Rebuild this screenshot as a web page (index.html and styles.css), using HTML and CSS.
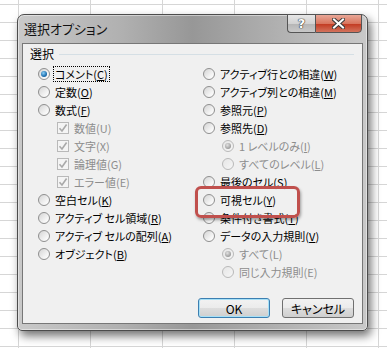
FILE: index.html
```html
<!DOCTYPE html>
<html>

<head>
  <title>選択オプション</title>
  <link rel="stylesheet" href="styles.css">
</head>

<body>
  <!-- Dialog window -->
  <div class="dialog">
    <!-- Title bar with caption buttons -->
    <div class="titlebar">
      <span class="title">選択オプション</span>
      <div class="caption">
        <span class="cap-help">?</span>
        <span class="cap-close">
          <svg width="13" height="11" viewBox="0 0 13 11">
            <path d="M2 1.5 L11 9.5 M11 1.5 L2 9.5" stroke="#3a3a3a" stroke-width="4" stroke-linecap="square" />
            <path d="M2 1.5 L11 9.5 M11 1.5 L2 9.5" stroke="#ffffff" stroke-width="2" stroke-linecap="square" />
          </svg>
        </span>
      </div>
    </div>

    <!-- Client area -->
    <div class="client">
      <div class="group-head">
        <span>選択</span>
        <i class="rule"></i>
      </div>

      <div class="columns">
        <!-- Left column -->
        <div class="col">
          <div class="row"><span class="radio on"></span><span class="focus">コメント(<u>C</u>)</span></div>
          <div class="row"><span class="radio"></span>定数(<u>O</u>)</div>
          <div class="row"><span class="radio"></span>数式(<u>F</u>)</div>
          <div class="row sub off"><span class="check"><svg width="10" height="10" viewBox="0 0 10 10"><path d="M1.5 5.2 L4 8 L8.6 1.5" fill="none" stroke="#a9a9a9" stroke-width="1.6" /></svg></span>数値(U)</div>
          <div class="row sub off"><span class="check"><svg width="10" height="10" viewBox="0 0 10 10"><path d="M1.5 5.2 L4 8 L8.6 1.5" fill="none" stroke="#a9a9a9" stroke-width="1.6" /></svg></span>文字(X)</div>
          <div class="row sub off"><span class="check"><svg width="10" height="10" viewBox="0 0 10 10"><path d="M1.5 5.2 L4 8 L8.6 1.5" fill="none" stroke="#a9a9a9" stroke-width="1.6" /></svg></span>論理値(G)</div>
          <div class="row sub off"><span class="check"><svg width="10" height="10" viewBox="0 0 10 10"><path d="M1.5 5.2 L4 8 L8.6 1.5" fill="none" stroke="#a9a9a9" stroke-width="1.6" /></svg></span>エラー値(E)</div>
          <div class="row"><span class="radio"></span>空白セル(<u>K</u>)</div>
          <div class="row"><span class="radio"></span>アクティブ セル領域(<u>R</u>)</div>
          <div class="row"><span class="radio"></span>アクティブ セルの配列(<u>A</u>)</div>
          <div class="row"><span class="radio"></span>オブジェクト(<u>B</u>)</div>
        </div>

        <!-- Right column -->
        <div class="col">
          <div class="row"><span class="radio"></span>アクティブ行との相違(<u>W</u>)</div>
          <div class="row"><span class="radio"></span>アクティブ列との相違(<u>M</u>)</div>
          <div class="row"><span class="radio"></span>参照元(<u>P</u>)</div>
          <div class="row"><span class="radio"></span>参照先(<u>D</u>)</div>
          <div class="row sub off"><span class="radio on"></span>1 レベルのみ(<u>I</u>)</div>
          <div class="row sub off"><span class="radio"></span>すべてのレベル(<u>L</u>)</div>
          <div class="row"><span class="radio"></span>最後のセル(<u>S</u>)</div>
          <div class="row"><span class="radio"></span>可視セル(<u>Y</u>)</div>
          <div class="row"><span class="radio"></span>条件付き書式(<u>T</u>)</div>
          <div class="row"><span class="radio"></span>データの入力規則(<u>V</u>)</div>
          <div class="row sub off"><span class="radio on"></span>すべて(L)</div>
          <div class="row sub off"><span class="radio"></span>同じ入力規則(E)</div>
        </div>
      </div>

      <!-- Dialog buttons -->
      <div class="buttons">
        <span class="btn default">OK</span>
        <span class="btn">キャンセル</span>
      </div>
    </div>

    <!-- Red annotation box -->
    <div class="highlight"></div>
  </div>
</body>

</html>
```

FILE: styles.css
```css
/* Page with the spreadsheet grid behind the dialog */
body {
  margin: 0;
  width: 387px;
  height: 348px;
  overflow: hidden;
  box-sizing: border-box;
  padding: 14px 0 0 17px;
  background-color: #fff;
  background-image:
    linear-gradient(to right, #d6d6d6 1px, transparent 1px),
    linear-gradient(to bottom, #d6d6d6 1px, transparent 1px);
  background-size: 72px 100%, 100% 18px;
  background-position: 18px 0, 0 4px;
  font-family: "Noto Sans CJK JP", sans-serif;
  font-size: 11px;
  font-feature-settings: "palt";
  color: #000;
}

/* Window frame */
.dialog {
  position: relative;
  width: 351px;
  height: 317px;
  box-sizing: border-box;
  border: 1px solid #4c4c4c;
  border-radius: 7px 7px 5px 5px;
  padding: 0 4px 6px;
  background: linear-gradient(to right, #c9c9c9 0%, #b0b0b0 30%, #979797 50%, #acacac 70%, #c9c9c9 100%);
  box-shadow: 3px 5px 10px rgba(0, 0, 0, 0.55), inset 0 0 0 1px rgba(255, 255, 255, 0.45);
}

.titlebar {
  height: 28px;
  display: flex;
  justify-content: space-between;
  align-items: flex-start;
}

.title {
  margin: 4px 0 0 2px;
  line-height: 20px;
  font-size: 13px;
  color: #111;
}

.caption {
  display: flex;
  margin: -1px 1px 0 0;
}

.cap-help,
.cap-close {
  height: 19px;
  box-sizing: border-box;
  border: 1px solid #555;
  display: flex;
  align-items: center;
  justify-content: center;
}

.cap-help {
  width: 28px;
  border-right: 0;
  border-radius: 0 0 0 4px;
  background: linear-gradient(#e6e6e6, #d2d2d2 50%, #b5b5b5 51%, #c8c8c8);
  color: #fff;
  font-family: "DejaVu Sans", sans-serif;
  font-weight: bold;
  font-size: 13px;
  text-shadow: 0 0 1px #333, 0 0 1px #333, 0 0 1px #333;
}

.cap-close {
  width: 47px;
  border-radius: 0 0 4px 0;
  background: linear-gradient(#e8a797, #d9765f 50%, #c2381f 51%, #d3735d);
}

/* Client area */
.client {
  height: 281px;
  box-sizing: border-box;
  border: 1px solid #777;
  background: #f0f0f0;
  padding: 0 8px 0 7px;
}

.group-head {
  height: 18px;
  display: flex;
  align-items: center;
  gap: 5px;
  font-size: 12px;
}

.rule {
  flex: 1;
  height: 1px;
  margin-top: 3px;
  background: #d5dfe5;
}

.columns {
  display: grid;
  grid-template-columns: 165px 1fr;
  margin-top: 3px;
  padding-left: 8px;
}

.row {
  height: 18px;
  display: flex;
  align-items: center;
  white-space: nowrap;
}

.row u {
  text-underline-offset: 1px;
}

.sub {
  padding-left: 19px;
}

.off {
  color: #8d8d8d;
}

/* Radio buttons */
.radio {
  position: relative;
  width: 12px;
  height: 12px;
  box-sizing: border-box;
  margin-right: 5px;
  border-radius: 50%;
  border: 1px solid #8f8f8f;
  background: linear-gradient(135deg, #d4d4d4, #f6f6f6 70%, #fff);
  flex-shrink: 0;
}

.radio.on::after {
  content: "";
  position: absolute;
  left: 2px;
  top: 2px;
  width: 6px;
  height: 6px;
  border-radius: 50%;
  background: radial-gradient(circle at 40% 35%, #8cd0f6, #1d6fb0 60%, #164f86);
}

.off .radio {
  border-color: #b9b9b9;
  background: linear-gradient(135deg, #e6e6e6, #f6f6f6);
}

.off .radio.on::after {
  background: radial-gradient(circle at 40% 35%, #e2e2e2, #9c9c9c 70%);
}

/* Check boxes */
.check {
  width: 12px;
  height: 12px;
  box-sizing: border-box;
  margin-right: 5px;
  border: 1px solid #b9b9b9;
  background: #f4f4f4;
  display: flex;
  align-items: center;
  justify-content: center;
}

.focus {
  outline: 1px dotted #000;
  outline-offset: 0;
  padding: 0 1px;
  margin-left: -1px;
  line-height: 14px;
}

/* OK / Cancel */
.buttons {
  display: flex;
  justify-content: flex-end;
  gap: 12px;
  margin-top: 17px;
}

.btn {
  width: 72px;
  height: 20px;
  box-sizing: border-box;
  border: 1px solid #707070;
  border-radius: 3px;
  background: linear-gradient(#f2f2f2, #ebebeb 50%, #dddddd 51%, #cfcfcf);
  display: flex;
  align-items: center;
  justify-content: center;
  font-size: 12px;
}

.btn.default {
  border-color: #3c7fb1;
  box-shadow: inset 0 0 0 1px #a6e0f7;
}

/* Red annotation around 可視セル */
.highlight {
  position: absolute;
  left: 177px;
  top: 171px;
  width: 105px;
  height: 32px;
  box-sizing: border-box;
  border: 3px solid #c0504d;
  border-radius: 6px;
  box-shadow: 1px 2px 3px rgba(0, 0, 0, 0.35);
}
```
